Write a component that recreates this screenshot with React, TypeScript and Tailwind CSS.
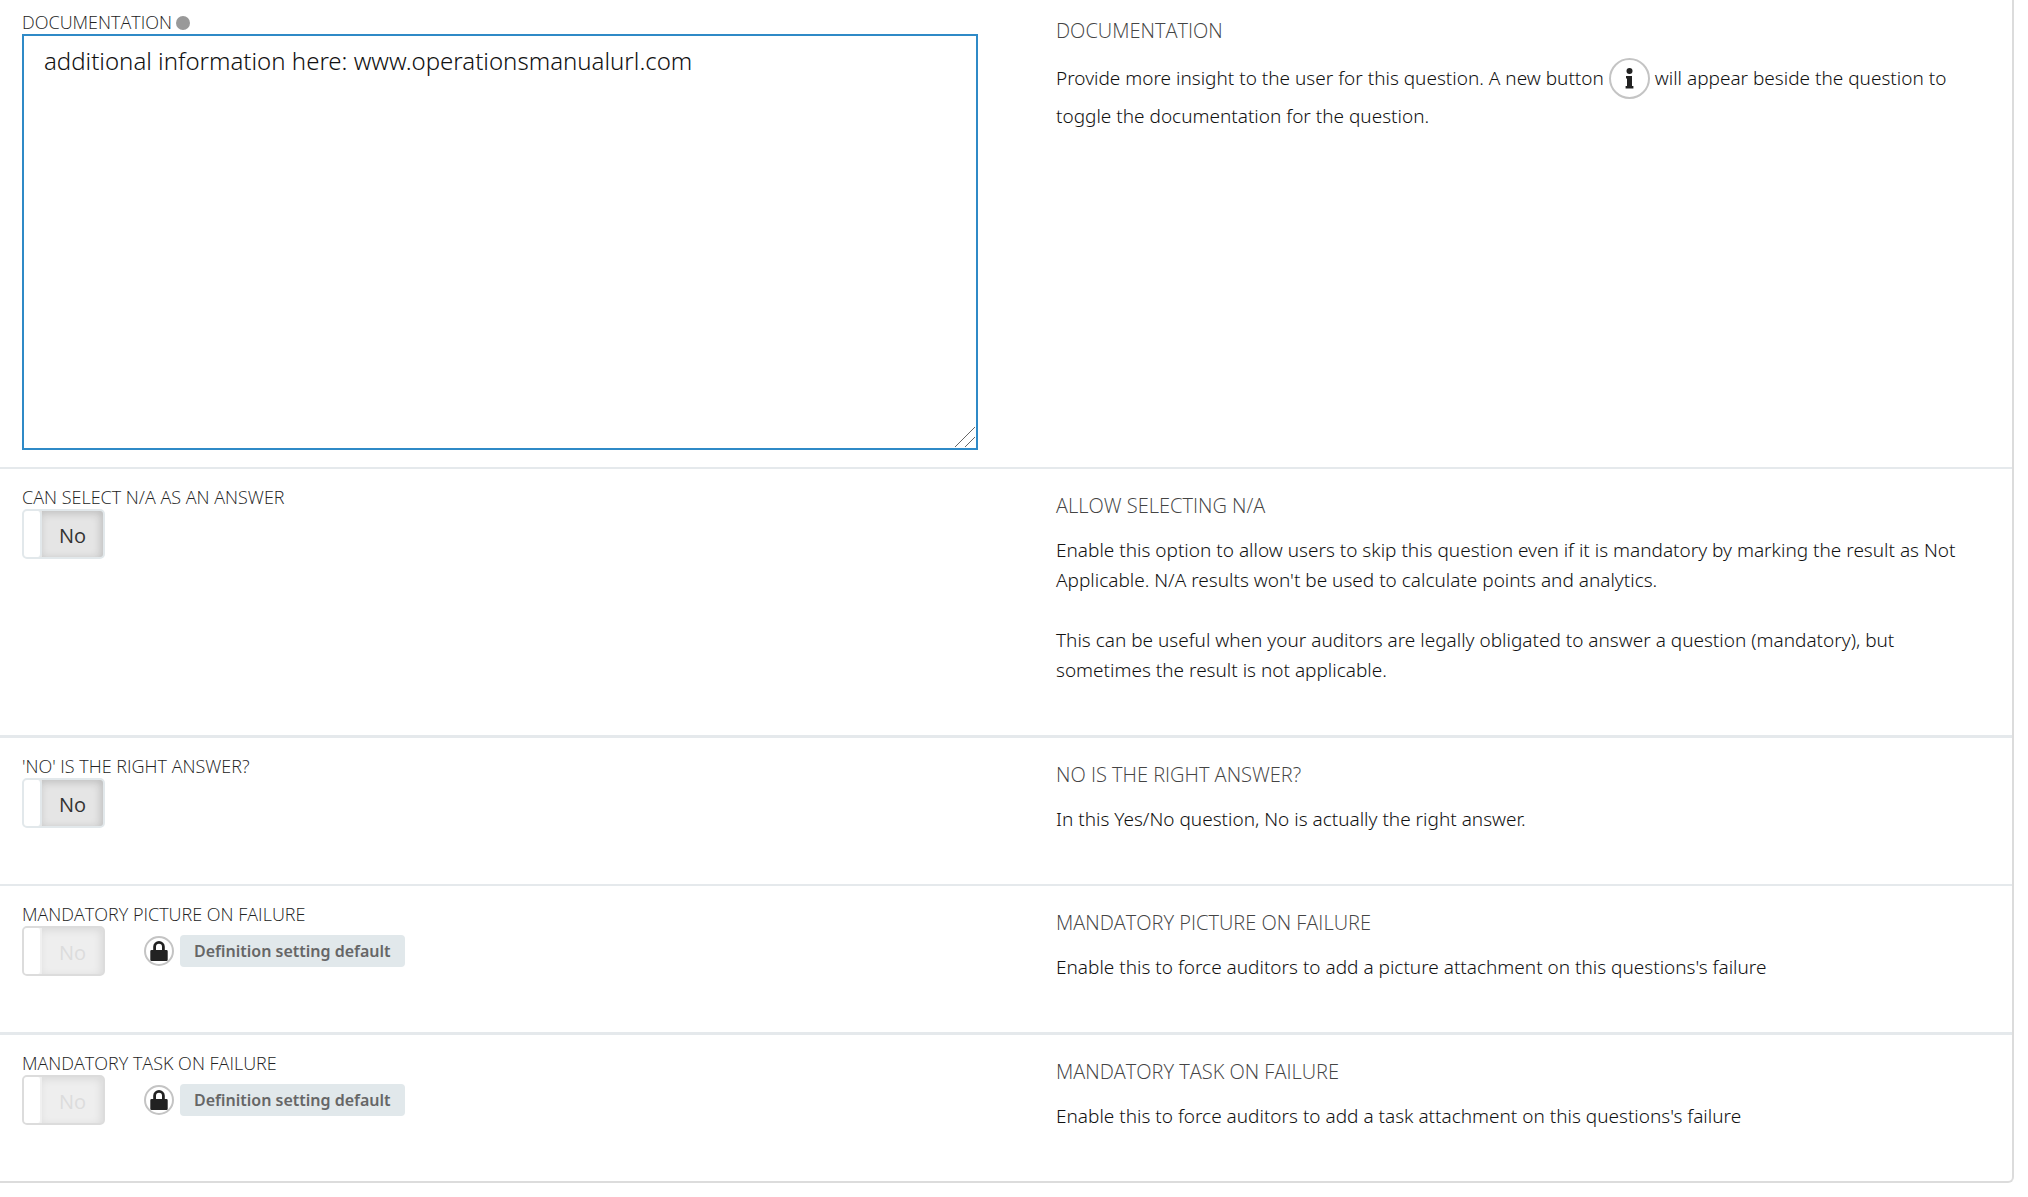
import { useState } from "react";
import type { ReactNode } from "react";

interface SettingRowProps {
  title: string;
  description: ReactNode;
  children: ReactNode;
}

interface ToggleProps {
  id: string;
  disabled?: boolean;
}

const labelClass = "flex items-center gap-1 text-lg leading-[23px] font-light text-[#222]";

const headingClass = "text-xl leading-[26px] font-light text-[#444]";

const bodyClass =
  "font-['Noto_Sans',sans-serif] text-[19px] leading-[30px] font-light text-[#111]";

const InfoIcon = () => (
  <span className="mb-0.5 inline-flex size-[41px] items-center justify-center rounded-full border-2 border-[#c4c4c4] align-middle">
    <svg width="9" height="21" viewBox="0 0 9 21" fill="#222">
      <circle cx="4.5" cy="3" r="3" />
      <path d="M1 8h6v10h1.4v2.6H.6V18H2v-7.4H1z" />
    </svg>
  </span>
);

const LockIcon = () => (
  <span className="flex size-[30px] items-center justify-center rounded-full border-2 border-[#c4c4c4]">
    <svg width="18" height="20" viewBox="0 0 18 20" fill="#222">
      <path
        fillRule="evenodd"
        d="M3.2 9V5.8a5.8 5.8 0 0 1 11.6 0V9h1.7a1.2 1.2 0 0 1 1.2 1.2v8.6a1.2 1.2 0 0 1-1.2 1.2h-15a1.2 1.2 0 0 1-1.2-1.2v-8.6A1.2 1.2 0 0 1 1.5 9zM6 9h6V5.8a3 3 0 0 0-6 0z"
      />
    </svg>
  </span>
);

function Toggle({ id, disabled = false }: ToggleProps) {
  const [on, setOn] = useState(false);

  return (
    <button
      id={id}
      type="button"
      role="switch"
      aria-checked={on}
      disabled={disabled}
      onClick={() => setOn(!on)}
      className={`flex h-[50px] w-[83px] overflow-hidden rounded-[5px] border-2 text-xl ${
        on ? "flex-row-reverse" : ""
      } ${
        disabled
          ? "border-[#dcdcdc] bg-[#eee] text-[#dcdcdc]"
          : "border-[#e2e8eb] bg-[#e5e5e5] text-[#333]"
      }`}
    >
      <span
        className={`h-full w-[18px] rounded-r-[4px] border-r-2 bg-white ${
          disabled ? "border-[#f0f0f0]" : "border-[#e2e8eb]"
        }`}
      />
      <span
        className={`flex h-full flex-1 items-center justify-center pt-1 ${
          disabled
            ? "shadow-[inset_-2px_2px_8px_rgba(0,0,0,0.09)]"
            : "shadow-[inset_-2px_2px_8px_rgba(0,0,0,0.18)]"
        }`}
      >
        {on ? "Yes" : "No"}
      </span>
    </button>
  );
}

const DefaultBadge = () => (
  <div className="flex items-center gap-1.5">
    <LockIcon />
    <span className="rounded-[4px] bg-[#e1e8eb] px-3.5 font-['Noto_Sans',sans-serif] text-base leading-8 font-semibold text-[#666]">
      Definition setting default
    </span>
  </div>
);

function SettingRow({ title, description, children }: SettingRowProps) {
  return (
    <section className="grid grid-cols-2 gap-x-[78px] border-b-2 border-[#e5e9ec] pb-[50px] pl-[22px] last:border-b-0 even:border-b-[3px]">
      <div className="pt-[17px]">{children}</div>
      <div className="pt-6 pr-12">
        <h2 className={headingClass}>{title}</h2>
        <div className={`mt-4 ${bodyClass}`}>{description}</div>
      </div>
    </section>
  );
}

function Documentation() {
  const [text, setText] = useState(
    "additional information here: www.operationsmanualurl.com",
  );

  return (
    <section className="grid grid-cols-2 gap-x-[78px] border-b-2 border-[#e5e9ec] pb-[17px] pl-[22px]">
      <div className="pt-[11px]">
        <label htmlFor="documentation" className={labelClass}>
          DOCUMENTATION
          <span className="size-3.5 rounded-full bg-[#999]" />
        </label>
        <div className="relative">
          <textarea
            id="documentation"
            value={text}
            onChange={(e) => setText(e.target.value)}
            className="block h-[416px] w-full resize-none border-2 border-[#2f8ac7] px-5 py-[7px] font-['Noto_Sans',sans-serif] text-2xl leading-9 font-light text-[#111] outline-none"
          />
          {/* resize grip */}
          <svg
            width="20"
            height="20"
            viewBox="0 0 20 20"
            className="pointer-events-none absolute right-[3px] bottom-[3px]"
            stroke="#666"
            fill="none"
          >
            <path d="M0 20L20 0M10 20L20 10" />
          </svg>
        </div>
      </div>
      <div className="pt-[18px] pr-12">
        <h2 className={headingClass}>DOCUMENTATION</h2>
        <p className={`mt-3.5 ${bodyClass}`}>
          Provide more insight to the user for this question. A new button <InfoIcon /> will
          appear beside the question to toggle the documentation for the question.
        </p>
      </div>
    </section>
  );
}

const locked = [
  {
    id: "mandatory-picture",
    title: "MANDATORY PICTURE ON FAILURE",
    description:
      "Enable this to force auditors to add a picture attachment on this questions's failure",
  },
  {
    id: "mandatory-task",
    title: "MANDATORY TASK ON FAILURE",
    description:
      "Enable this to force auditors to add a task attachment on this questions's failure",
  },
];

export default function App() {
  return (
    <div className="min-h-screen bg-white pr-3.5 font-['Open_Sans',sans-serif]">
      <main className="rounded-br-[6px] border-r-2 border-b-2 border-[#dcdcdc]">
        <Documentation />

        <SettingRow
          title="ALLOW SELECTING N/A"
          description={
            <>
              <p>
                Enable this option to allow users to skip this question even if it is mandatory
                by marking the result as Not Applicable. N/A results won't be used to calculate
                points and analytics.
              </p>
              <p className="mt-[30px]">
                This can be useful when your auditors are legally obligated to answer a question
                (mandatory), but sometimes the result is not applicable.
              </p>
            </>
          }
        >
          <label htmlFor="allow-na" className={labelClass}>
            CAN SELECT N/A AS AN ANSWER
          </label>
          <Toggle id="allow-na" />
        </SettingRow>

        <SettingRow
          title="NO IS THE RIGHT ANSWER?"
          description="In this Yes/No question, No is actually the right answer."
        >
          <label htmlFor="no-is-right" className={labelClass}>
            'NO' IS THE RIGHT ANSWER?
          </label>
          <Toggle id="no-is-right" />
        </SettingRow>

        {locked.map((row) => (
          <SettingRow key={row.id} title={row.title} description={row.description}>
            <label htmlFor={row.id} className={labelClass}>
              {row.title}
            </label>
            <div className="flex items-center gap-[39px]">
              <Toggle id={row.id} disabled />
              <DefaultBadge />
            </div>
          </SettingRow>
        ))}
      </main>
    </div>
  );
}
